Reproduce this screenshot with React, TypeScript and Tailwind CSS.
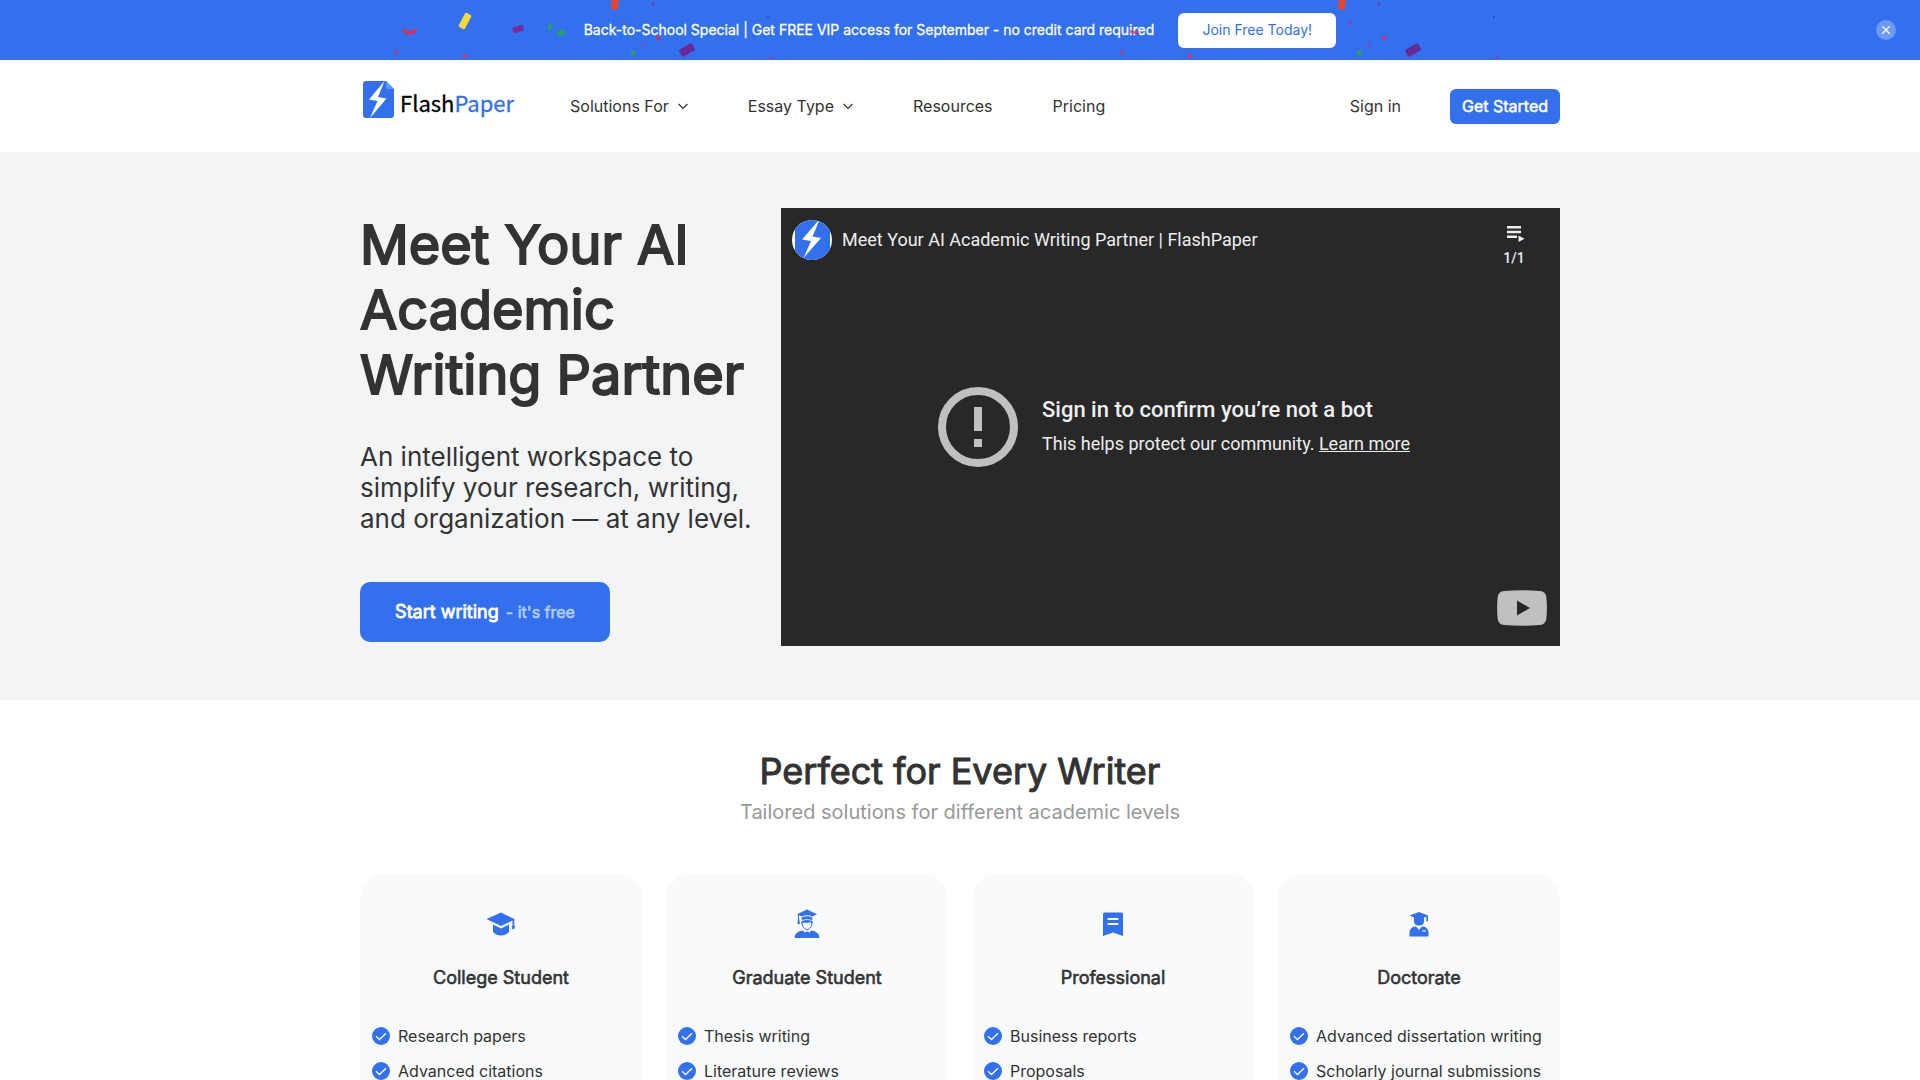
import React from "react";
import { X } from "lucide-react";

type IconProps = { className?: string };

type Card = {
  title: string;
  icon: React.ReactNode;
  items: string[];
};

type Piece = { x: number; y: number; w: number; h: number; r: number; color: string };

// Confetti tile, repeated across the promo bar
const confetti: Piece[] = [
  { x: 465, y: 21, w: 7, h: 16, r: 28, color: "#f5d93a" },
  { x: 518, y: 29, w: 11, h: 6, r: -15, color: "#7a2a9c" },
  { x: 550, y: 27, w: 4, h: 6, r: 25, color: "#2aa05c" },
  { x: 561, y: 33, w: 8, h: 5, r: -15, color: "#2aa05c" },
  { x: 396, y: 52, w: 3, h: 4, r: 0, color: "#c8356a" },
  { x: 465, y: 56, w: 4, h: 4, r: 0, color: "#c8356a" },
  { x: 653, y: 4, w: 3, h: 3, r: 0, color: "#8a35b5" },
  { x: 615, y: 3, w: 7, h: 13, r: 8, color: "#e8452f" },
  { x: 624, y: 23, w: 3, h: 3, r: 0, color: "#a03a9a" },
  { x: 658, y: 38, w: 4, h: 4, r: 0, color: "#c8356a" },
  { x: 643, y: 45, w: 2, h: 3, r: 0, color: "#b03a80" },
  { x: 633, y: 53, w: 4, h: 5, r: 0, color: "#2aa05c" },
  { x: 687, y: 50, w: 15, h: 8, r: -30, color: "#6a2a96" },
  { x: 771, y: 58, w: 3, h: 3, r: 0, color: "#a03a9a" },
  { x: 768, y: 17, w: 2, h: 2, r: 0, color: "#2a48b0" },
  { x: 1122, y: 52, w: 3, h: 4, r: 0, color: "#c8356a" },
  { x: 1190, y: 56, w: 4, h: 4, r: 0, color: "#c8356a" },
  { x: 1379, y: 4, w: 3, h: 3, r: 0, color: "#8a35b5" },
  { x: 1342, y: 3, w: 7, h: 13, r: 8, color: "#e8452f" },
  { x: 1350, y: 23, w: 3, h: 3, r: 0, color: "#a03a9a" },
  { x: 1384, y: 38, w: 4, h: 4, r: 0, color: "#c8356a" },
  { x: 1369, y: 45, w: 2, h: 3, r: 0, color: "#b03a80" },
  { x: 1359, y: 53, w: 4, h: 5, r: 0, color: "#2aa05c" },
  { x: 1413, y: 50, w: 15, h: 8, r: -30, color: "#6a2a96" },
  { x: 1497, y: 58, w: 3, h: 3, r: 0, color: "#a03a9a" },
  { x: 1494, y: 17, w: 2, h: 2, r: 0, color: "#2a48b0" },
];

const Confetti = () => (
  <svg className="pointer-events-none absolute left-1/2 top-0 h-[60px] w-[1920px] -translate-x-1/2" viewBox="0 0 1920 60">
    {confetti.map((p, i) => (
      <rect
        key={i}
        x={p.x - p.w / 2}
        y={p.y - p.h / 2}
        width={p.w}
        height={p.h}
        rx="1.5"
        fill={p.color}
        transform={`rotate(${p.r} ${p.x} ${p.y})`}
      />
    ))}
    <path d="M403 29.500q3 3.500 7 3.500t5.500-4" fill="none" stroke="#d62f5c" strokeWidth="3.500" />
    <path d="M1130 31q4 2.500 9 1" fill="none" stroke="#d62f5c" strokeWidth="3" opacity="0.7" />
  </svg>
);

const LogoMark = ({ className }: IconProps) => (
  <svg className={className} viewBox="0 0 31 37">
    <path d="M3 0h20l8 8v26a3 3 0 0 1-3 3H3a3 3 0 0 1-3-3V3a3 3 0 0 1 3-3z" fill="#3370ee" />
    <path d="M23 0l8 8h-6a2 2 0 0 1-2-2z" fill="#5b9bf8" />
    <path d="M21.500 0L6 18.500l8.500 1.500L7 37l16.500-19.500-8.500-1.500z" fill="#fff" />
  </svg>
);

const Chevron = () => (
  <svg className="h-[10px] w-[10px]" viewBox="0 0 10 10" fill="none" stroke="#333" strokeWidth="1.200">
    <path d="M.6 3L5 7.400 9.400 3" />
  </svg>
);

const ChannelAvatar = ({ className }: IconProps) => (
  <svg className={className} viewBox="0 0 40 40">
    <clipPath id="avatar-clip">
      <circle cx="20" cy="20" r="20" />
    </clipPath>
    <g clipPath="url(#avatar-clip)">
      <rect width="40" height="40" fill="#fff" />
      <rect x="3" width="35" height="40" fill="#3370ee" />
      <path d="M29 0l9 9V0z" fill="#5b9bf8" />
      <path d="M26 1L10 19.500l9 1.500-7.500 17L29 18l-8.500-1.500L27 1z" fill="#fff" />
    </g>
  </svg>
);

const ErrorIcon = ({ className }: IconProps) => (
  <svg className={className} viewBox="0 0 80 80" fill="#c0c0c0">
    <circle cx="40" cy="40" r="36" fill="none" stroke="#c0c0c0" strokeWidth="8" />
    <path d="M36 20h8v24h-8zM36 52h8v8h-8z" />
  </svg>
);

const PlaylistIcon = ({ className }: IconProps) => (
  <svg className={className} viewBox="0 0 18 16" fill="#eee">
    <path d="M0 0h14v2.500H0zM0 4.700h14v2.500H0zM0 9.400h10v2.500H0zM11.500 9.500v6.500l6-3.250z" />
  </svg>
);

const YoutubeIcon = ({ className }: IconProps) => (
  <svg className={className} viewBox="0 0 50 36">
    <path
      d="M7 .9Q25-.6 43 .9q5.500.5 6.300 6Q50.500 18 49.300 29q-.8 5.500-6.300 6-18 1.500-36 0-5.500-.5-6.300-6-1.200-11 0-22Q1.500 1.400 7 .9z"
      fill="#c0c0c0"
    />
    <path d="M20 10.500v15l13-7.500z" fill="#282828" />
  </svg>
);

const CollegeIcon = () => (
  <svg className="h-8 w-8" viewBox="0 0 32 32" fill="#3370ee">
    <path d="M16 4.500L1.500 11 16 18l11.500-5.500V17h1.800v-6z" />
    <path d="M8 16.500v7.500q3.500 3.500 8 3.500t8-3.500v-7.500l-8 4z" />
    <path d="M28.400 16l2 3.200h-4zM27 18.500h2.500v2.500H27z" />
  </svg>
);

const GraduateIcon = () => (
  <svg className="h-8 w-8" viewBox="0 0 32 32">
    <path d="M16 1.500L6 6.300l4.700 2.200q5.300-2.500 10.600 0L26 6.300z" fill="#3370ee" />
    <path d="M7.500 7v7" stroke="#3370ee" strokeWidth="1" />
    <path d="M7 10.500h1.200L9 16H6.500z" fill="#3370ee" />
    <path d="M10.700 9.500q5.300-2.500 10.600 0v2.600q-5.300-1.800-10.600 0z" fill="#3370ee" />
    <path d="M10.500 13q5.500-1.800 11 0v2.500h-1.300l-.7-1.500q-3.500 1.500-7 .5l-.7 1h-1.300z" fill="#3370ee" />
    <path d="M11 14.500q-.3 5 5 7.500 5.300-2.500 5-7.500" fill="none" stroke="#3370ee" strokeWidth="1" />
    <path d="M3.500 30q0-6.500 8.500-7.500l1.500 2L16 23.500l2.500 1 1.500-2q8.500 1 8.500 7.500z" fill="#3370ee" />
  </svg>
);

const ProfessionalIcon = () => (
  <svg className="h-8 w-8" viewBox="0 0 32 32">
    <path d="M7.500 4.500h17a1.500 1.500 0 0 1 1.500 1.500v22L16 24.500 6 28V6a1.500 1.500 0 0 1 1.500-1.500z" fill="#3370ee" />
    <path d="M11.500 11h9M11.500 16h9" stroke="#fff" strokeWidth="2.200" strokeLinecap="round" />
  </svg>
);

const DoctorateIcon = () => (
  <svg className="h-8 w-8" viewBox="0 0 32 32" fill="#3370ee">
    <path d="M16 4L6.500 7.500 11 9.500V13q0 4.500 5 4.500t5-4.500V9.500l2.300-1v4.700H25V7.500z" />
    <path d="M12.500 18.500q1 .2 3.500 3.500 2.500-3.300 3.500-3.500 6 .5 6 6.500v3q0 .5-.5.500H7q-.5 0-.5-.5v-3q0-6 6-6.500z" />
    <path d="M19.500 23h3.200" stroke="#fff" strokeWidth="1.300" />
  </svg>
);

const CheckIcon = () => (
  <svg className="h-[18px] w-[18px] shrink-0" viewBox="0 0 18 18">
    <circle cx="9" cy="9" r="9" fill="#3370ee" />
    <path d="M4 9.200l3.500 3.300L14 6.200" fill="none" stroke="#fff" strokeWidth="1.300" />
  </svg>
);

const cards: Card[] = [
  { title: "College Student", icon: <CollegeIcon />, items: ["Research papers", "Advanced citations"] },
  { title: "Graduate Student", icon: <GraduateIcon />, items: ["Thesis writing", "Literature reviews"] },
  { title: "Professional", icon: <ProfessionalIcon />, items: ["Business reports", "Proposals"] },
  { title: "Doctorate", icon: <DoctorateIcon />, items: ["Advanced dissertation writing", "Scholarly journal submissions"] },
];

const PromoBar = () => (
  <div className="relative flex h-[60px] items-center justify-center overflow-hidden bg-[#3370ee] text-white">
    <p className="text-sm [-webkit-text-stroke:0.3px_#fff]">
      Back-to-School Special | Get FREE VIP access for September - no credit card required
    </p>
    <Confetti />
    <button className="relative ml-6 h-[35px] w-[158px] rounded-md bg-white text-sm text-[#3370ee]">Join Free Today!</button>
    <button aria-label="Close" className="absolute right-6 top-5 flex h-5 w-5 items-center justify-center rounded-full bg-[#6d9af4]">
      <X className="h-3.5 w-3.5" strokeWidth={2} />
    </button>
  </div>
);

const Header = () => (
  <header className="bg-white">
    <div className="mx-auto flex h-[92px] max-w-[1200px] items-center text-base text-[#333]">
      <a href="#" className="mb-3.5 ml-[3px] flex items-end font-['Noto_Sans_CJK_SC','Noto_Sans',sans-serif] text-[22px] [-webkit-text-stroke:0.3px_currentColor]">
        <LogoMark className="mr-1.5 h-[37px] w-[31px]" />
        <span className="leading-8 text-black">
          Flash<span className="text-[#3370ee]">Paper</span>
        </span>
      </a>
      <nav className="ml-14 flex items-center gap-[60px]">
        <a href="#" className="flex items-center gap-[9px]">
          Solutions For <Chevron />
        </a>
        <a href="#" className="flex items-center gap-[9px]">
          Essay Type <Chevron />
        </a>
        <a href="#">Resources</a>
        <a href="#">Pricing</a>
      </nav>
      <a href="#" className="ml-auto mr-[49px]">Sign in</a>
      <button className="h-[35px] w-[110px] rounded-md bg-[#3370ee] text-white [-webkit-text-stroke:0.5px_#fff]">Get Started</button>
    </div>
  </header>
);

const VideoPlayer = () => (
  <div className="relative flex h-[438px] w-[779px] items-center bg-[#282828] font-[Roboto,sans-serif] text-[#eee]">
    <div className="absolute inset-x-0 top-0 flex items-start justify-between pl-[11px] pr-[35px] pt-3">
      <a href="#" className="flex items-center gap-2.5 text-lg">
        <ChannelAvatar className="h-10 w-10" />
        Meet Your AI Academic Writing Partner | FlashPaper
      </a>
      <button className="mt-1.5 flex flex-col items-center gap-1.5 text-sm font-medium">
        <PlaylistIcon className="ml-1 h-4 w-[18px]" />
        1/1
      </button>
    </div>
    <div className="ml-[157px] flex items-center gap-6">
      <ErrorIcon className="h-20 w-20" />
      <div className="pt-0.5">
        <p className="text-[22px] font-medium leading-8">Sign in to confirm you’re not a bot</p>
        <p className="text-lg leading-9">
          This helps protect our community. <a href="#" className="underline">Learn more</a>
        </p>
      </div>
    </div>
    <a href="#" aria-label="YouTube" className="absolute bottom-5 right-[13px]">
      <YoutubeIcon className="h-9 w-[50px]" />
    </a>
  </div>
);

const Hero = () => (
  <section className="bg-[#f3f4f6] pb-[54px] pt-14">
    <div className="mx-auto flex max-w-[1200px] items-start justify-between">
      <div className="w-[400px] pt-1 text-[#333]">
        <h1 className="text-[54px] leading-[65px] [-webkit-text-stroke:2px_#333]">Meet Your AI Academic Writing Partner</h1>
        <p className="mt-[34px] text-[26px] leading-[31px]">An intelligent workspace to simplify your research, writing, and organization — at any level.</p>
        <button className="mt-12 h-[60px] w-[250px] rounded-[10px] bg-[#3370ee] text-lg text-white [-webkit-text-stroke:0.8px_#fff]">
          Start writing <span className="ml-0.5 text-base text-[#b5cdfa] [-webkit-text-stroke:0.6px_#b5cdfa]">- it's free</span>
        </button>
      </div>
      <VideoPlayer />
    </div>
  </section>
);

const Writers = () => (
  <section className="mx-auto max-w-[1200px] pt-12 text-[#333]">
    <h2 className="text-center text-4xl leading-[46px] [-webkit-text-stroke:1px_#333]">Perfect for Every Writer</h2>
    <p className="mt-0.5 text-center text-xl leading-8 text-[#999]">Tailored solutions for different academic levels</p>
    <div className="mt-[46px] grid grid-cols-4 gap-6">
      {cards.map((card) => (
        <article key={card.title} className="rounded-3xl bg-[#f9fafc] px-3 pb-8 pt-[34px]">
          <div className="flex justify-center">{card.icon}</div>
          <h3 className="mt-6 text-center text-lg [-webkit-text-stroke:0.6px_#333]">{card.title}</h3>
          <ul className="mt-[26px]">
            {card.items.map((item) => (
              <li key={item} className="flex h-[35px] items-center gap-2 text-base">
                <CheckIcon />
                {item}
              </li>
            ))}
          </ul>
        </article>
      ))}
    </div>
  </section>
);

export default function App() {
  return (
    <div className="h-screen overflow-hidden bg-white font-[Inter,sans-serif]">
      <PromoBar />
      <Header />
      <Hero />
      <Writers />
    </div>
  );
}
